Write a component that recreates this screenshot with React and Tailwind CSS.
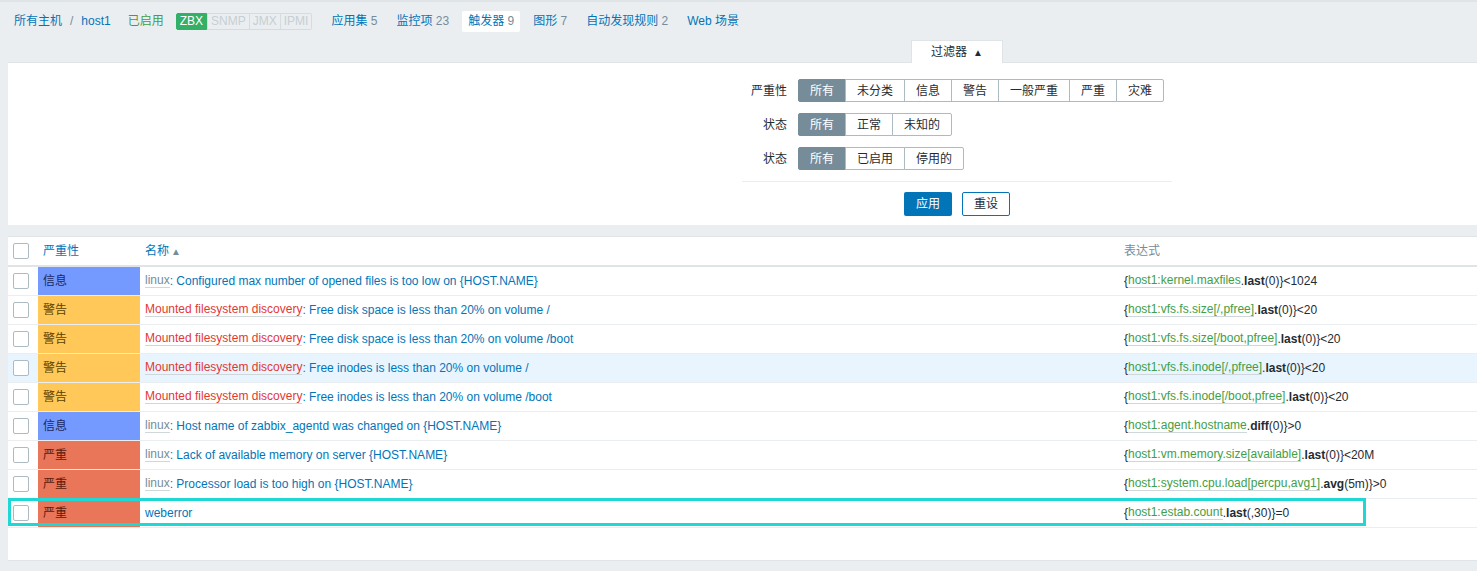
import React from 'react';

const rows = [
    { sev: 'info', host: 'linux', name: 'Configured max number of opened files is too low on {HOST.NAME}', key: 'host1:kernel.maxfiles', fn: 'last', rest: '(0)}<1024' },
    { sev: 'warn', host: 'Mounted filesystem discovery', red: true, name: 'Free disk space is less than 20% on volume /', key: 'host1:vfs.fs.size[/,pfree]', fn: 'last', rest: '(0)}<20' },
    { sev: 'warn', host: 'Mounted filesystem discovery', red: true, name: 'Free disk space is less than 20% on volume /boot', key: 'host1:vfs.fs.size[/boot,pfree]', fn: 'last', rest: '(0)}<20' },
    { sev: 'warn', host: 'Mounted filesystem discovery', red: true, name: 'Free inodes is less than 20% on volume /', key: 'host1:vfs.fs.inode[/,pfree]', fn: 'last', rest: '(0)}<20', hover: true },
    { sev: 'warn', host: 'Mounted filesystem discovery', red: true, name: 'Free inodes is less than 20% on volume /boot', key: 'host1:vfs.fs.inode[/boot,pfree]', fn: 'last', rest: '(0)}<20' },
    { sev: 'info', host: 'linux', name: 'Host name of zabbix_agentd was changed on {HOST.NAME}', key: 'host1:agent.hostname', fn: 'diff', rest: '(0)}>0' },
    { sev: 'high', host: 'linux', name: 'Lack of available memory on server {HOST.NAME}', key: 'host1:vm.memory.size[available]', fn: 'last', rest: '(0)}<20M' },
    { sev: 'high', host: 'linux', name: 'Processor load is too high on {HOST.NAME}', key: 'host1:system.cpu.load[percpu,avg1]', fn: 'avg', rest: '(5m)}>0' },
    { sev: 'high', name: 'weberror', key: 'host1:estab.count', fn: 'last', rest: '(,30)}=0' },
];

const sevStyle = {
    info: { label: '信息', cls: 'bg-[#7499ff] text-[#1b2a5e]' },
    warn: { label: '警告', cls: 'bg-[#ffc859] text-[#5a4300]' },
    high: { label: '严重', cls: 'bg-[#e97659] text-[#5b1a0c]' },
};

function Checkbox() {
    return <div className="w-[16px] h-[16px] border border-[#acbbc2] rounded-[2px] bg-white" />;
}

function Seg({ items }) {
    return (
        <div className="flex h-[23px]">
            {items.map((t, i) => (
                <div
                    key={t}
                    className={`flex items-center px-[11px] border ${i > 0 ? '-ml-px' : ''} ${i === 0 ? 'bg-[#768d99] border-[#768d99] text-white rounded-l-[2px]' : 'bg-white border-[#acbbc2] text-[#1f2c33]'} ${i === items.length - 1 ? 'rounded-r-[2px]' : ''}`}
                >
                    {t}
                </div>
            ))}
        </div>
    );
}

function App() {
    return (
        <div className="min-h-[571px] bg-[#ebeef0] border-t-2 border-[#dfe4e7] text-[12px] text-[#1f2c33] font-['Liberation_Sans','Noto_Sans_CJK_SC',sans-serif] overflow-hidden">
            {/* Host navigation */}
            <div className="flex items-center h-[38px] pl-[14px]">
                <span className="text-[#0275b8]">所有主机</span>
                <span className="mx-[8px] text-[#768d99]">/</span>
                <span className="text-[#0275b8]">host1</span>
                <span className="ml-[17px] text-[#429e47]">已启用</span>
                <div className="flex ml-[12px] h-[17px] leading-[15px]">
                    <span className="px-[3px] bg-[#34af67] border border-[#34af67] text-white rounded-l-[2px]">ZBX</span>
                    <span className="px-[3px] border border-[#d4dce0] text-[#c6cfd3]">SNMP</span>
                    <span className="px-[3px] border border-l-0 border-[#d4dce0] text-[#c6cfd3]">JMX</span>
                    <span className="px-[3px] border border-l-0 border-[#d4dce0] text-[#c6cfd3] rounded-r-[2px]">IPMI</span>
                </div>
                <div className="flex items-center gap-[7px] ml-[13px]">
                    <span className="px-[6px] text-[#0275b8]">应用集 <span className="text-[#768d99]">5</span></span>
                    <span className="px-[6px] text-[#0275b8]">监控项 <span className="text-[#768d99]">23</span></span>
                    <span className="px-[6px] h-[21px] leading-[21px] bg-white rounded-[2px] text-[#0275b8]">触发器 <span className="text-[#768d99]">9</span></span>
                    <span className="px-[6px] text-[#0275b8]">图形 <span className="text-[#768d99]">7</span></span>
                    <span className="px-[6px] text-[#0275b8]">自动发现规则 <span className="text-[#768d99]">2</span></span>
                    <span className="px-[6px] text-[#0275b8]">Web 场景</span>
                </div>
            </div>

            {/* Filter tab */}
            <div className="flex pl-[911px]">
                <div className="w-[92px] h-[23px] flex items-center justify-center gap-[6px] bg-white border border-b-0 border-[#dfe4e7] -mb-px relative">
                    <span>过滤器</span>
                    <span className="text-[10px]">▲</span>
                </div>
            </div>

            {/* Filter panel */}
            <div className="ml-[8px] bg-white border-t border-[#dfe4e7] h-[163px] pt-[16px]">
                <div className="ml-[734px] w-[430px]">
                    <div className="flex flex-col gap-[11px]">
                        <div className="flex items-center">
                            <div className="w-[45px] text-right">严重性</div>
                            <div className="ml-[11px]"><Seg items={['所有', '未分类', '信息', '警告', '一般严重', '严重', '灾难']} /></div>
                        </div>
                        <div className="flex items-center">
                            <div className="w-[45px] text-right">状态</div>
                            <div className="ml-[11px]"><Seg items={['所有', '正常', '未知的']} /></div>
                        </div>
                        <div className="flex items-center">
                            <div className="w-[45px] text-right">状态</div>
                            <div className="ml-[11px]"><Seg items={['所有', '已启用', '停用的']} /></div>
                        </div>
                    </div>
                    <div className="mt-[11px] border-t border-[#ebeef0]" />
                    <div className="flex justify-center gap-[10px] mt-[10px]">
                        <button className="w-[48px] h-[24px] bg-[#0275b8] text-white rounded-[2px]">应用</button>
                        <button className="w-[48px] h-[24px] border border-[#0275b8] text-[#1f2c33] rounded-[2px] bg-white">重设</button>
                    </div>
                </div>
            </div>

            {/* Triggers table */}
            <div className="ml-[8px] mt-[11px] bg-white border-t border-b border-[#dfe4e7] h-[325px] relative">
                <div className="flex items-center h-[30px] border-b-2 border-[#dfe4e7]">
                    <div className="w-[30px] pl-[5px]"><Checkbox /></div>
                    <div className="w-[102px] pl-[5px] text-[#0275b8]">严重性</div>
                    <div className="w-[979px] pl-[5px] text-[#0275b8] flex items-center gap-[2px]">
                        名称<span className="text-[#768d99] text-[10px]">▲</span>
                    </div>
                    <div className="flex-1 pl-[5px] text-[#768d99]">表达式</div>
                </div>
                {rows.map((r, i) => (
                    <div key={i} className={`flex h-[29px] border-b border-[#ebeef0] ${r.hover ? 'bg-[#e8f5ff]' : ''}`}>
                        <div className="w-[30px] pl-[5px] flex items-center"><Checkbox /></div>
                        <div className={`w-[102px] pl-[5px] flex items-center ${sevStyle[r.sev].cls}`}>{sevStyle[r.sev].label}</div>
                        <div className="w-[979px] pl-[5px] flex items-center whitespace-nowrap">
                            {r.host && (
                                <>
                                    <span className={`${r.red ? 'text-[#e33734]' : 'text-[#768d99]'} border-b border-[#cfd7db] leading-[13px]`}>{r.host}</span>
                                    <span className="text-[#0275b8]">:&nbsp;</span>
                                </>
                            )}
                            <span className="text-[#0275b8]">{r.name}</span>
                        </div>
                        <div className="flex-1 pl-[5px] flex items-center whitespace-nowrap">
                            <span>{'{'}</span>
                            <span className="text-[#429e47] border-b border-[#cfd7db] leading-[13px]">{r.key}</span>
                            <span>.</span>
                            <span className="font-bold">{r.fn}</span>
                            <span>{r.rest}</span>
                        </div>
                    </div>
                ))}
                {/* selection highlight */}
                <div className="absolute left-0 top-[261px] w-[1358px] h-[28px] border-[3px] border-[#1fd8d6] pointer-events-none" />
            </div>
        </div>
    );
}

export default App;
